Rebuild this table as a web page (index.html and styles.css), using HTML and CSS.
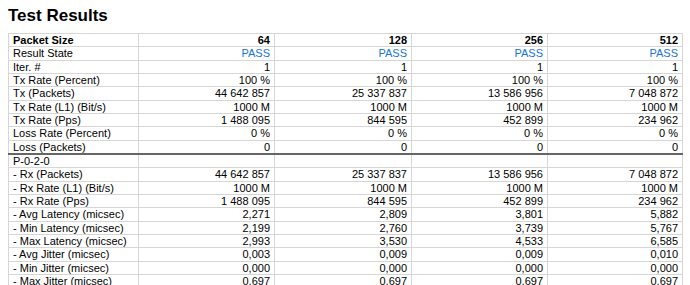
FILE: index.html
```html
<!DOCTYPE html>
<html>
<head>
<meta charset="utf-8">
<link rel="stylesheet" href="styles.css">
</head>
<body>
<div class="page">
  <h1 class="title">Test Results</h1>
  <table class="results">
    <colgroup>
      <col class="c-label"><col class="c-val"><col class="c-val2"><col class="c-val"><col class="c-val3">
    </colgroup>
    <tbody>
      <tr class="head"><td>Packet Size</td><td>64</td><td>128</td><td>256</td><td>512</td></tr>
      <tr class="state"><td>Result State</td><td>PASS</td><td>PASS</td><td>PASS</td><td>PASS</td></tr>
      <tr><td>Iter. #</td><td>1</td><td>1</td><td>1</td><td>1</td></tr>
      <tr><td>Tx Rate (Percent)</td><td>100 %</td><td>100 %</td><td>100 %</td><td>100 %</td></tr>
      <tr><td>Tx (Packets)</td><td>44 642 857</td><td>25 337 837</td><td>13 586 956</td><td>7 048 872</td></tr>
      <tr><td>Tx Rate (L1) (Bit/s)</td><td>1000 M</td><td>1000 M</td><td>1000 M</td><td>1000 M</td></tr>
      <tr><td>Tx Rate (Pps)</td><td>1 488 095</td><td>844 595</td><td>452 899</td><td>234 962</td></tr>
      <tr><td>Loss Rate (Percent)</td><td>0 %</td><td>0 %</td><td>0 %</td><td>0 %</td></tr>
      <tr><td>Loss (Packets)</td><td>0</td><td>0</td><td>0</td><td>0</td></tr>
      <tr class="group"><td>P-0-2-0</td><td></td><td></td><td></td><td></td></tr>
      <tr><td>- Rx (Packets)</td><td>44 642 857</td><td>25 337 837</td><td>13 586 956</td><td>7 048 872</td></tr>
      <tr><td>- Rx Rate (L1) (Bit/s)</td><td>1000 M</td><td>1000 M</td><td>1000 M</td><td>1000 M</td></tr>
      <tr><td>- Rx Rate (Pps)</td><td>1 488 095</td><td>844 595</td><td>452 899</td><td>234 962</td></tr>
      <tr><td>- Avg Latency (micsec)</td><td>2,271</td><td>2,809</td><td>3,801</td><td>5,882</td></tr>
      <tr><td>- Min Latency (micsec)</td><td>2,199</td><td>2,760</td><td>3,739</td><td>5,767</td></tr>
      <tr><td>- Max Latency (micsec)</td><td>2,993</td><td>3,530</td><td>4,533</td><td>6,585</td></tr>
      <tr><td>- Avg Jitter (micsec)</td><td>0,003</td><td>0,009</td><td>0,009</td><td>0,010</td></tr>
      <tr><td>- Min Jitter (micsec)</td><td>0,000</td><td>0,000</td><td>0,000</td><td>0,000</td></tr>
      <tr><td>- Max Jitter (micsec)</td><td>0,697</td><td>0,697</td><td>0,697</td><td>0,697</td></tr>
    </tbody>
  </table>
</div>
</body>
</html>
```
FILE: styles.css
```css
html, body {
  margin: 0;
  padding: 0;
  background: #ffffff;
}

.page {
  padding: 6px 0 0 8px;
  font-family: "Liberation Sans", Arial, sans-serif;
  color: #000000;
}

.title {
  margin: 0 0 7px 0;
  font-size: 17px;
  line-height: 20px;
  font-weight: bold;
  color: #000000;
}

.results {
  border-collapse: collapse;
  table-layout: fixed;
  width: 674px;
  font-size: 11px;
}

.c-label { width: 130px; }
.c-val { width: 136px; }
.c-val2 { width: 137px; }
.c-val3 { width: 135px; }

.results td {
  border: 1px solid #d6d6d6;
  padding: 0 4px 0 4px;
  line-height: 12.33px;
  height: 12.33px;
  text-align: right;
  white-space: nowrap;
  overflow: hidden;
}

.results td:first-child {
  text-align: left;
}

.head td {
  font-weight: bold;
}

.state td {
  color: #1a73d6;
}

.state td:first-child {
  color: #000000;
}

.group td {
  border-top: 2px solid #666666;
}
```
